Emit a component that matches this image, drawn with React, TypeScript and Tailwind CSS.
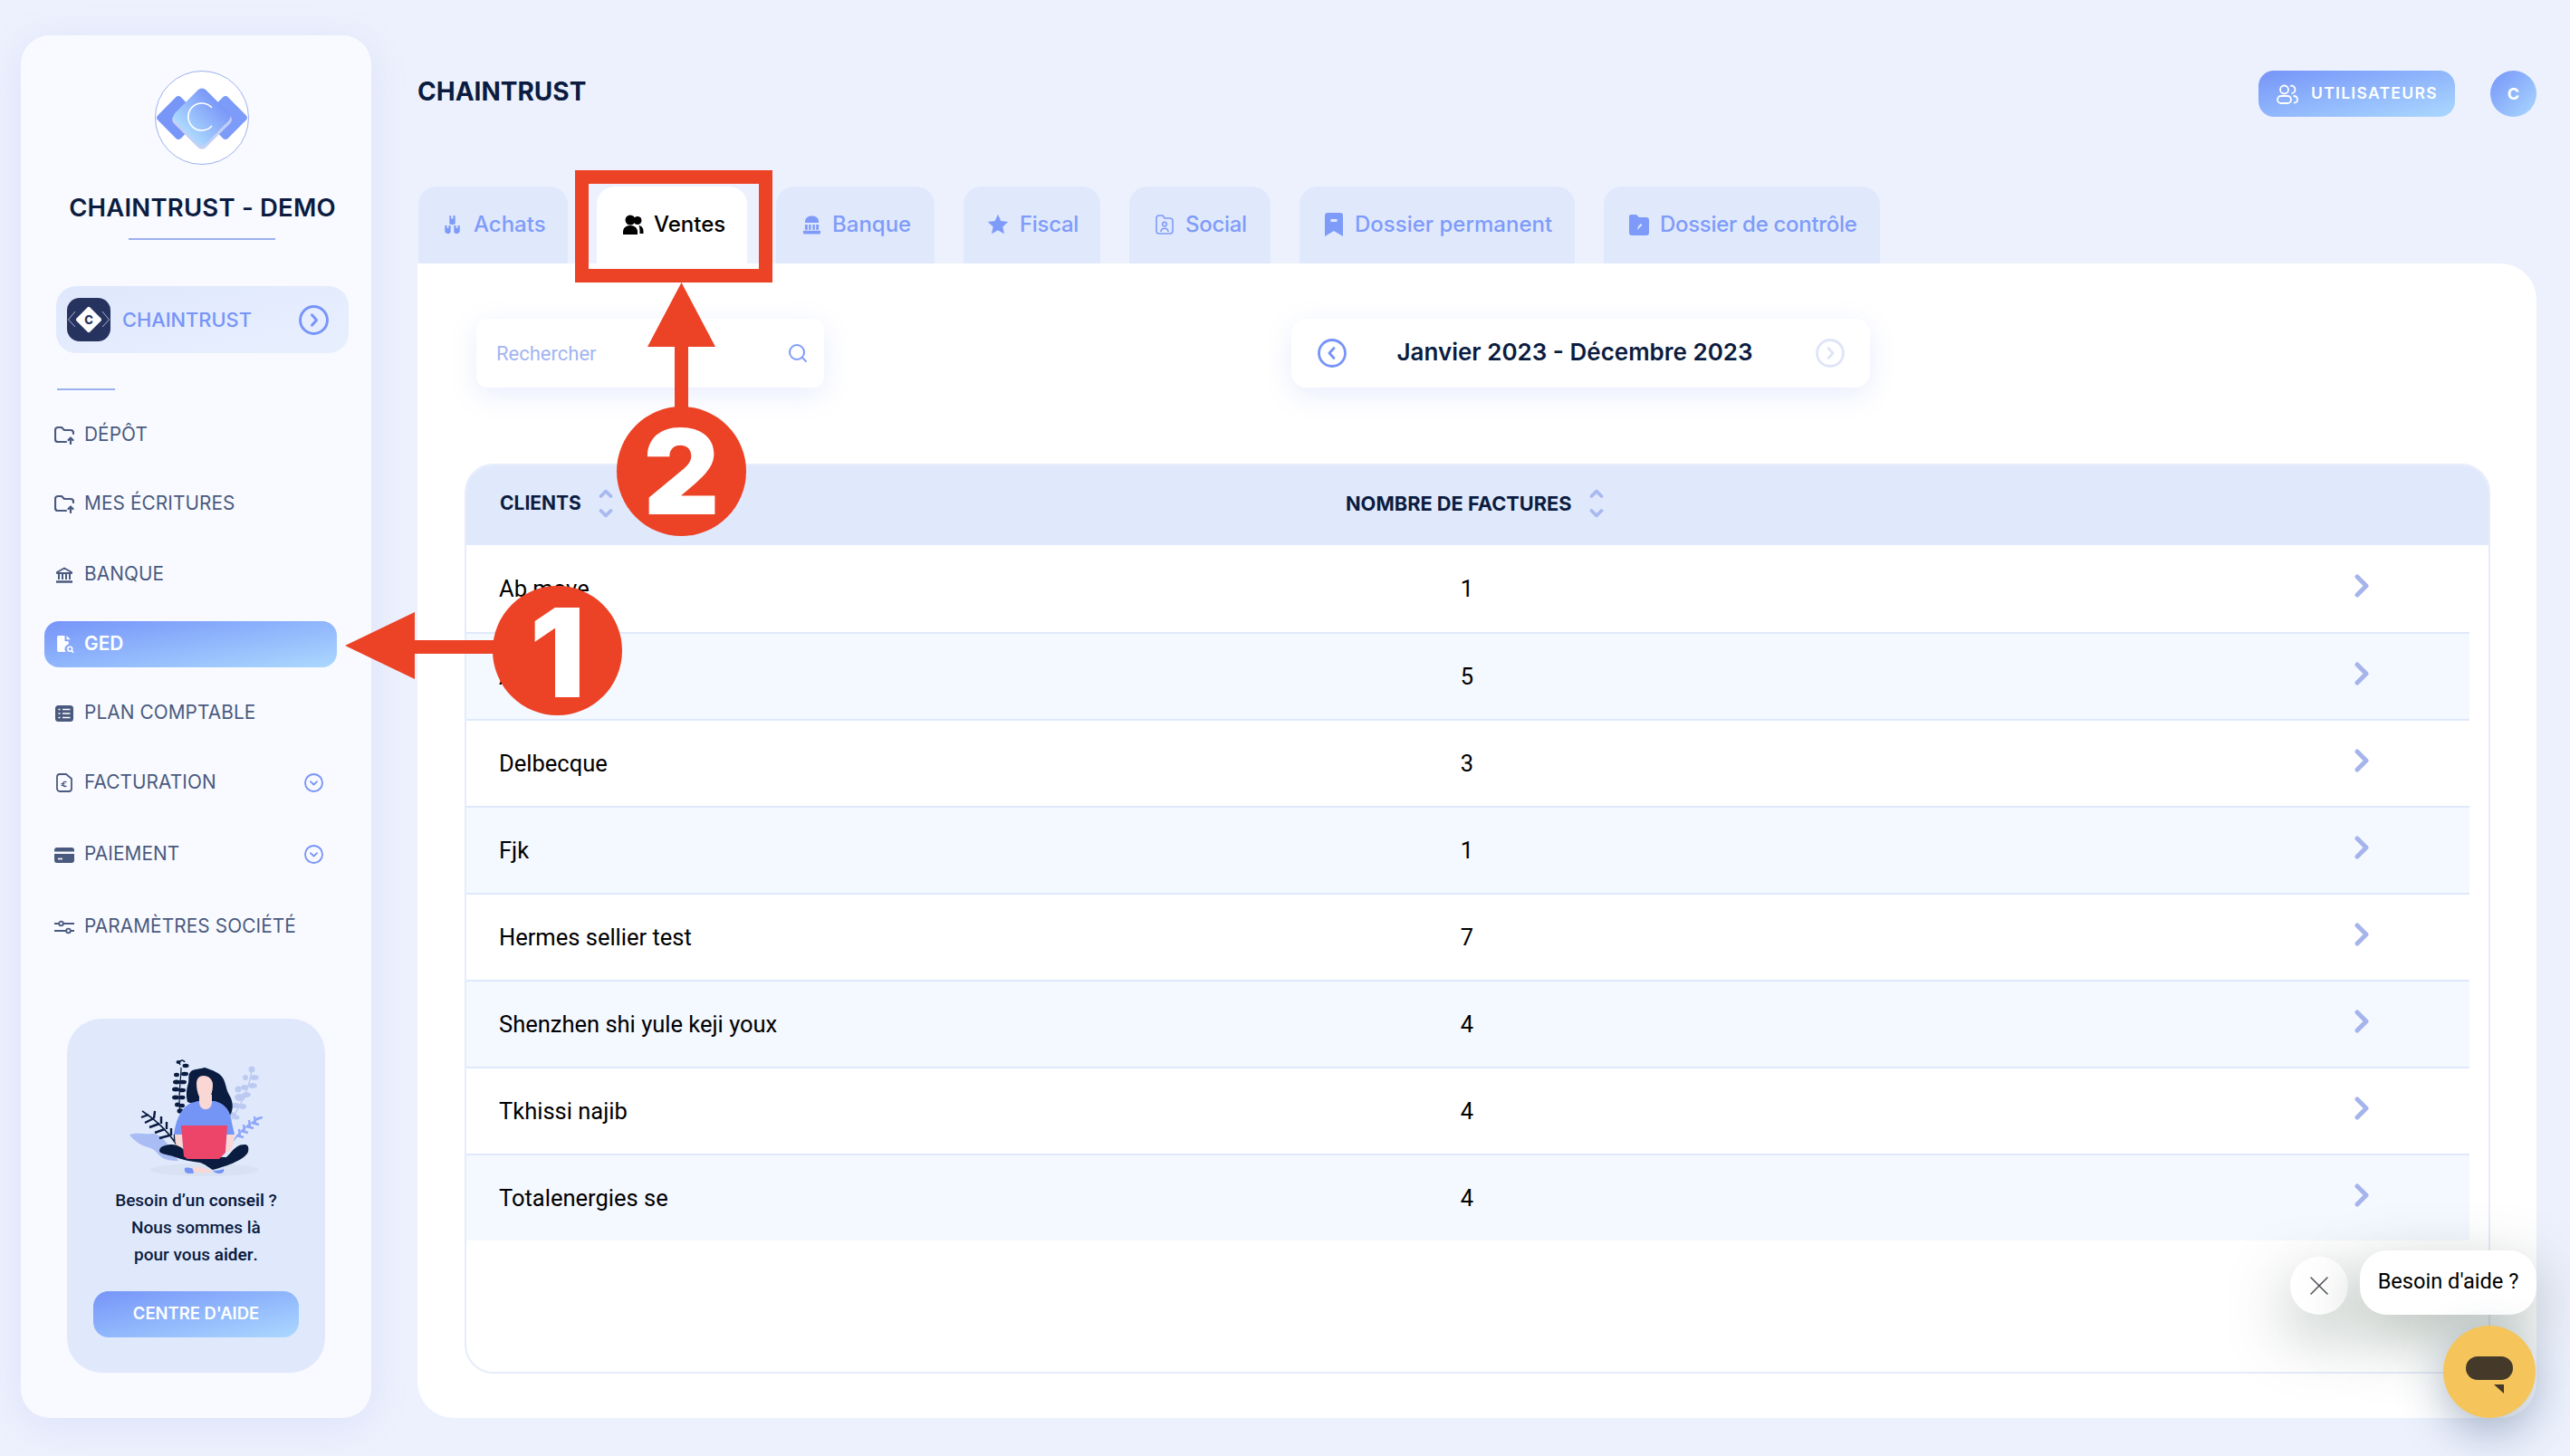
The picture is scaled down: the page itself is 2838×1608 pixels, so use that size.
import type { ReactNode } from "react";
import { Search, X } from "lucide-react";

const navy = "#0b1c40";

const FolderUp = () => (
  <svg viewBox="0 0 22 20" className="h-[20px] w-[22px]" fill="none" stroke="currentColor" strokeWidth="2.200" strokeLinecap="round" strokeLinejoin="round">
    <path d="M13 17H4a3 3 0 0 1-3-3V4a3 3 0 0 1 3-3h4l3 3h7a3 3 0 0 1 3 3v1" />
    <path d="M18 19v-6M15.500 15l2.500-2.500 2.500 2.500" />
  </svg>
);

const Bank = () => (
  <svg viewBox="0 0 20 18" className="h-[18px] w-[20px]" fill="none" stroke="currentColor" strokeWidth="2" strokeLinejoin="round">
    <path d="M2 6 10 1.500 18 6v1H2z" />
    <path d="M4 8v6M8 8v6M12 8v6M16 8v6" />
    <path d="M1 16.500h18" strokeWidth="2.500" />
  </svg>
);

const GedIcon = () => (
  <svg viewBox="0 0 20 20" className="h-[21px] w-[21px]" fill="white">
    <path d="M2 2.500A1.500 1.500 0 0 1 3.500 1H10v6h4v3a5 5 0 0 0-3 8H3.500A1.500 1.500 0 0 1 2 16.500z" />
    <path d="M12 1l4 4h-4z" />
    <circle cx="15.500" cy="15" r="2.300" fill="none" stroke="white" strokeWidth="1.500" />
    <path d="m17.200 16.800 2 2" stroke="white" strokeWidth="1.500" />
  </svg>
);

const ListIcon = () => (
  <svg viewBox="0 0 20 18" className="h-[18px] w-[20px]">
    <rect width="20" height="18" rx="3.500" fill="currentColor" />
    <path d="M3.500 4.500h2M3.500 9h2M3.500 13.500h2M8 4.500h8.500M8 9h8.500M8 13.500h8.500" stroke="white" strokeWidth="1.700" />
  </svg>
);

const InvoiceIcon = () => (
  <svg viewBox="0 0 18 21" className="h-[21px] w-[18px]" fill="none" stroke="currentColor" strokeWidth="1.800" strokeLinejoin="round">
    <path d="M4 1h7l6 5v11a3 3 0 0 1-3 3H4a3 3 0 0 1-3-3V4a3 3 0 0 1 3-3z" />
    <path d="M11.500 10a2.500 2.500 0 0 0-4 1v2a2.500 2.500 0 0 0 4 1M5.500 11.500h4M5.500 13.300h4" strokeWidth="1.200" />
  </svg>
);

const CardIcon = () => (
  <svg viewBox="0 0 22 18" className="h-[18px] w-[22px]">
    <path d="M0 4a3 3 0 0 1 3-3h16a3 3 0 0 1 3 3v1.500H0zM0 8h22v7a3 3 0 0 1-3 3H3a3 3 0 0 1-3-3z" fill="currentColor" />
    <path d="M4 13.500h5" stroke="white" strokeWidth="1.600" />
  </svg>
);

const SlidersIcon = () => (
  <svg viewBox="0 0 22 16" className="h-[16px] w-[22px]" fill="none" stroke="currentColor" strokeWidth="1.800">
    <path d="M0 4h5M10 4h12M0 12h13M18 12h4" />
    <circle cx="7.500" cy="4" r="2.300" />
    <circle cx="15.500" cy="12" r="2.300" />
  </svg>
);

const CircleChevron = ({ dir, className }: { dir: "left" | "right" | "down"; className: string }) => (
  <svg viewBox="0 0 32 32" className={className} fill="none" stroke="currentColor" strokeWidth="2.800" strokeLinecap="round" strokeLinejoin="round">
    <circle cx="16" cy="16" r="14.500" />
    {dir === "left" && <path d="m18 10.500-5 5.500 5 5.500" />}
    {dir === "right" && <path d="m14 10.500 5 5.500-5 5.500" />}
    {dir === "down" && <path d="m10.500 14 5.500 5 5.500-5" />}
  </svg>
);

const BigLogo = () => (
  <svg viewBox="0 0 104 104" className="h-[104px] w-[104px]">
    <defs>
      <linearGradient id="dia" x1="0" y1="0" x2="0" y2="1">
        <stop offset="0" stopColor="#7a97f8" />
        <stop offset="1" stopColor="#abd8fe" />
      </linearGradient>
    </defs>
    <circle cx="52" cy="52" r="51.500" fill="white" stroke="#9bb0ef" strokeWidth="1" />
    <rect x="8" y="34" width="36" height="36" rx="4" transform="rotate(45 26 52)" fill="#7896f8" />
    <rect x="60" y="34" width="36" height="36" rx="4" transform="rotate(45 78 52)" fill="#7d9bf8" />
    <rect x="27" y="29" width="50" height="50" rx="6" transform="rotate(45 52 54)" fill="#c3d0f7" />
    <rect x="28" y="27" width="48" height="48" rx="6" transform="rotate(45 52 51)" fill="url(#dia)" />
    <path d="M63 41a15 15 0 1 0 0 20" fill="none" stroke="white" strokeWidth="1.600" />
  </svg>
);

const SmallLogo = () => (
  <svg viewBox="0 0 48 48" className="h-[48px] w-[48px]">
    <rect width="48" height="48" rx="14" fill="#26335f" />
    <path d="M9 15 1.500 24 9 32M39 15l7.500 9-7.500 8" fill="none" stroke="#c9d3f3" strokeWidth="0.800" />
    <rect x="13.500" y="13.500" width="21" height="21" rx="2" transform="rotate(45 24 24)" fill="white" />
    <text x="24" y="29" textAnchor="middle" fontSize="13" fontWeight="800" fontFamily="Inter, sans-serif" fill="#26335f">C</text>
  </svg>
);

const Woman = () => (
  <svg viewBox="0 0 165 140" className="h-[140px] w-[165px]">
    <ellipse cx="91" cy="127" rx="60" ry="7" fill="#d8e2f3" />
    <path d="M8 88c8-3 18 0 24-1 8-1 14 6 20 14l10 16c-8 0-16-1-20-5-5-5-6-8-14-10-8-2-16-8-20-14z" fill="#a9bcf3" />
    <g stroke="#0a1c40" strokeWidth="1.500" fill="#0a1c40">
      <path d="M22 62c14 9 28 22 38 37" fill="none" />
      <path d="M29 66l-8 3M35 70l-10 5M41 76l-11 4M47 82l-11 4M52 89l-11 3M36 62l-1 8M43 68l0 8M49 74l0 8M54 81l0 8M58 88l0 7" strokeWidth="2.400" />
    </g>
    <g fill="#0a1c40">
      <path d="M64 11c-3-4 3-7 5-3" fill="none" stroke="#0a1c40" strokeWidth="1.500" />
      <path d="M65 14c0 16-4 30-1 50" fill="none" stroke="#0a1c40" strokeWidth="1.300" />
      <ellipse cx="62" cy="8" rx="2.500" ry="2" />
      <ellipse cx="70" cy="12" rx="3.500" ry="2.200" />
      <ellipse cx="69" cy="21" rx="4" ry="2.300" />
      <ellipse cx="60" cy="22" rx="3" ry="2.300" />
      <ellipse cx="67" cy="30" rx="4" ry="2.300" />
      <ellipse cx="60" cy="30" rx="4" ry="2.500" />
      <ellipse cx="66" cy="39" rx="4" ry="2.300" />
      <ellipse cx="59" cy="38" rx="4" ry="2.500" />
      <ellipse cx="66" cy="47" rx="3.500" ry="2.300" />
      <ellipse cx="59" cy="47" rx="4" ry="2.500" />
      <ellipse cx="66" cy="56" rx="3" ry="2.300" />
      <ellipse cx="61" cy="55" rx="3" ry="2.500" />
      <ellipse cx="64" cy="62" rx="3.500" ry="2.800" />
    </g>
    <g fill="#bccaf2">
      <path d="M143 16c-2 20-12 40-24 58" fill="none" stroke="#bccaf2" strokeWidth="1.500" />
      <circle cx="143" cy="16" r="3.500" />
      <ellipse cx="146" cy="25" rx="5" ry="3" />
      <ellipse cx="136" cy="25" rx="3" ry="3" />
      <ellipse cx="144" cy="34" rx="5" ry="3" />
      <ellipse cx="135" cy="36" rx="4" ry="3" />
      <ellipse cx="137" cy="44" rx="5" ry="3" />
      <ellipse cx="128" cy="38" rx="3.500" ry="3.500" />
      <ellipse cx="130" cy="47" rx="6" ry="4" />
      <ellipse cx="125" cy="56" rx="6" ry="3" />
      <ellipse cx="133" cy="57" rx="4" ry="3" />
      <ellipse cx="121" cy="66" rx="5" ry="3" />
      <ellipse cx="126" cy="69" rx="3.500" ry="2.500" />
    </g>
    <g stroke="#8ea7fa" strokeWidth="2.400" fill="none">
      <path d="M155 69c-12 4-24 14-33 27" strokeWidth="1.500" />
      <path d="M154 69l-6 2M146 68l1 7M140 72l1 7M134 77l1 7M129 82l1 7M151 77l-8-2M145 81l-8-2M139 86l-8-2M134 91l-8-2" />
    </g>
    <path d="M91 14c8 3 17 5 21 13 3 7 3 12 6 17 4 6 5 14 2 21l-2 3-46-16c-2-7-1-15 1-21 1-6-1-9 3-13 4-3 10-2 15-4z" fill="#0a1c40" />
    <path d="M57 88c2-15 7-28 17-34 4-2 7-2 10-3l18 0c9 2 15 8 17 15l5 22z" fill="#7595f6" />
    <path d="M58 88h7l2 18h-5c-3-6-4-12-4-18zM116 88h8c0 7-2 14-5 19h-4z" fill="#f8d7d4" />
    <path d="M85 44h14v8c0 11-14 11-14 0z" fill="#f8d7d4" />
    <path d="M82 32c0-6 3-9 8-9s10 4 10 10c0 8-3 18-9 18s-9-11-9-19z" fill="#f8d7d4" />
    <path d="M41 106c0-5 7-7 14-7 9 0 14 7 22 13l38 1c7-7 11-14 20-14 4 0 5 3 4 8-3 9-27 17-39 20-5-3-8-6-14-8-9-1-19-3-30-7-7-2-15-3-15-6z" fill="#0a1c40" />
    <path d="M69 125c3-1 9 0 12 2l-3 4H73c-3 0-5-3-4-6zM100 128c4 0 9-1 12-2 1 3-1 5-5 5-3 0-5-1-7-3z" fill="#7595f6" />
    <path d="M78 124c5-1 13 2 22 4l-3 2H82c-3 0-5-3-4-6z" fill="#f8d7d4" />
    <path d="M65 78h51l-2 30-7 7H72l-4-3z" fill="#ec4569" />
  </svg>
);

const TabIcon = ({ name, color }: { name: string; color: string }) => {
  if (name === "Achats")
    return (
      <svg viewBox="0 0 20 24" className="h-[22px] w-[19px]" fill={color}>
        <path d="M7 1h1.500v4H11V1h1.500a1 1 0 0 1 1 1v8a2 2 0 0 1-2 2h-3a2 2 0 0 1-2-2V2a1 1 0 0 1 1-1z" />
        <path d="M1 13h2.500v3h2v-3H8v7a3 3 0 0 1-3.500 3A3.500 3.500 0 0 1 1 20zM12 13h2.500v3h2v-3H19v7a3.500 3.500 0 0 1-3.500 3 3 3 0 0 1-3.500-3z" />
      </svg>
    );
  if (name === "Ventes")
    return (
      <svg viewBox="0 0 24 24" className="h-[24px] w-[24px]" fill={color}>
        <circle cx="9" cy="7" r="5.500" />
        <circle cx="17" cy="7.500" r="4.500" />
        <path d="M1 23v-3c0-4 3-7 8-7s8 3 8 7v3z" />
        <path d="M18.500 13c3 .5 5 3 5 6v3h-4v-3c0-2-.5-4.500-1-6z" />
      </svg>
    );
  if (name === "Banque")
    return (
      <svg viewBox="0 0 20 22" className="h-[22px] w-[19px]" fill={color}>
        <path d="M2 8c0-5 4-7 8-7s8 2 8 7v1H2z" />
        <path d="M2 11h3v6H2zM6.500 11h2.500v6H6.500zM11 11h2.500v6H11zM15 11h3v6h-3zM0 18h20v3a1 1 0 0 1-1 1H1a1 1 0 0 1-1-1z" />
      </svg>
    );
  if (name === "Fiscal")
    return (
      <svg viewBox="0 0 24 24" className="h-[24px] w-[24px]" fill={color}>
        <path d="M12 .8l3.300 7.300 8 .9-6 5.400 1.700 7.900-7-4-7 4 1.700-7.900-6-5.400 8-.9z" />
      </svg>
    );
  if (name === "Social")
    return (
      <svg viewBox="0 0 20 22" className="h-[22px] w-[20px]" fill="none" stroke={color} strokeWidth="1.600" strokeLinejoin="round">
        <path d="M1 4a3 3 0 0 1 3-3h4l2 3h6a3 3 0 0 1 3 3v11a3 3 0 0 1-3 3H4a3 3 0 0 1-3-3z" />
        <circle cx="10" cy="10.500" r="2.300" />
        <path d="M6 19c0-5 8-5 8 0" />
      </svg>
    );
  if (name === "Dossier permanent")
    return (
      <svg viewBox="0 0 20 26" className="h-[26px] w-[20px]">
        <path d="M3 0h14a3 3 0 0 1 3 3v23l-10-6-10 6V3a3 3 0 0 1 3-3z" fill={color} />
        <rect x="6.500" y="7" width="7" height="3" fill="#e0e9fc" />
      </svg>
    );
  return (
    <svg viewBox="0 0 22 24" className="h-[24px] w-[22px]">
      <path d="M0 3a2 2 0 0 1 2-2h6l3 3h8a3 3 0 0 1 3 3v14a3 3 0 0 1-3 3H3a3 3 0 0 1-3-3z" fill={color} />
      <path d="m9 18 1-4 3-3 1.500 1.500-3 3z" fill="#e0e9fc" />
    </svg>
  );
};

const tabs = [
  { name: "Achats", cls: "w-[165px] pl-[28px] gap-[14px]", active: false },
  { name: "Ventes", cls: "w-[166px] pl-[28px] gap-[11px]", active: true },
  { name: "Banque", cls: "w-[175px] pl-[30px] gap-[13px]", active: false },
  { name: "Fiscal", cls: "w-[151px] pl-[26px] gap-[12px] tracking-[-0.3px]", active: false },
  { name: "Social", cls: "w-[156px] pl-[29px] gap-[13px] tracking-[-0.3px]", active: false },
  { name: "Dossier permanent", cls: "w-[304px] pl-[28px] gap-[13px]", active: false },
  { name: "Dossier de contrôle", cls: "w-[305px] pl-[28px] gap-[12px] tracking-[-0.3px]", active: false },
];

const nav: { label: string; icon: ReactNode; mt: string; active?: boolean; more?: boolean }[] = [
  { label: "DÉPÔT", icon: <FolderUp />, mt: "mt-[24px]" },
  { label: "MES ÉCRITURES", icon: <FolderUp />, mt: "mt-[25px]" },
  { label: "BANQUE", icon: <Bank />, mt: "mt-[27px]" },
  { label: "GED", icon: <GedIcon />, mt: "mt-[26px]", active: true },
  { label: "PLAN COMPTABLE", icon: <ListIcon />, mt: "mt-[25px]" },
  { label: "FACTURATION", icon: <InvoiceIcon />, mt: "mt-[26px]", more: true },
  { label: "PAIEMENT", icon: <CardIcon />, mt: "mt-[28px]", more: true },
  { label: "PARAMÈTRES SOCIÉTÉ", icon: <SlidersIcon />, mt: "mt-[29px]" },
];

const rows = [
  { name: "Ab move", count: 1 },
  { name: "Air france", count: 5 },
  { name: "Delbecque", count: 3 },
  { name: "Fjk", count: 1 },
  { name: "Hermes sellier test", count: 7 },
  { name: "Shenzhen shi yule keji youx", count: 4 },
  { name: "Tkhissi najib", count: 4 },
  { name: "Totalenergies se", count: 4 },
];

const SortIcons = () => (
  <div className="flex flex-col gap-[12px] text-[#a9b9f0]">
    <svg viewBox="0 0 16 10" className="h-[10px] w-[16px]" fill="none" stroke="currentColor" strokeWidth="3.800" strokeLinecap="round" strokeLinejoin="round">
      <path d="m2.500 8 5.500-5.500 5.500 5.500" />
    </svg>
    <svg viewBox="0 0 16 10" className="h-[10px] w-[16px]" fill="none" stroke="currentColor" strokeWidth="3.800" strokeLinecap="round" strokeLinejoin="round">
      <path d="m2.500 2 5.500 5.500 5.500-5.500" />
    </svg>
  </div>
);

const Sidebar = () => (
  <aside className="mt-[39px] ml-[23px] flex h-[1527px] w-[387px] shrink-0 flex-col rounded-[32px] bg-[#f9faff] shadow-[0_8px_44px_rgba(120,145,240,0.14)]">
    <div className="mt-[39px] ml-[148px]">
      <BigLogo />
    </div>
    <h1 className="mt-[30px] pl-[14px] text-center text-[27.500px] leading-[34px] font-semibold tracking-[0.2px] text-[#0b1c40]">CHAINTRUST - DEMO</h1>
    <div className="mt-[17px] ml-[119px] h-[2px] w-[162px] bg-[#9bb0ef]" />
    <div className="mt-[51px] ml-[39px] flex h-[74px] w-[323px] items-center rounded-[22px] bg-gradient-to-br from-[#dfe7fc] to-[#e8f0ff] pl-[12px]">
      <SmallLogo />
      <span className="ml-[13px] text-[21.800px] font-medium text-[#7794f8]">CHAINTRUST</span>
      <CircleChevron dir="right" className="mr-[22px] ml-auto h-[33px] w-[33px] text-[#7794f8]" />
    </div>
    <div className="mt-[39px] ml-[40px] h-[2px] w-[64px] bg-[#9bb0ef]" />
    <nav className="flex flex-col">
      {nav.map((item) => (
        <div
          key={item.label}
          className={`${item.mt} ml-[26px] flex h-[51px] w-[323px] items-center rounded-[16px] pl-[11px] ${
            item.active ? "bg-gradient-to-br from-[#7794f8] to-[#abd8fe] font-semibold text-white" : "text-[#4a5a7e]"
          }`}
        >
          <span className="flex w-[22px] shrink-0 justify-center">{item.icon}</span>
          <span className="ml-[11px] text-[20.800px] leading-none tracking-[0.1px]">{item.label}</span>
          {item.more && <CircleChevron dir="down" className="mr-[15px] ml-auto h-[21px] w-[21px] text-[#7794f8]" />}
        </div>
      ))}
    </nav>
    <div className="mt-auto mb-[50px] ml-[51px] flex h-[391px] w-[285px] flex-col rounded-[38px] bg-[#e0e9fc] pt-[40px]">
      <div className="ml-[61px]">
        <Woman />
      </div>
      <p className="mt-[6px] text-center font-['Roboto',sans-serif] text-[19px] leading-[30px] font-medium text-[#0b1c40]">
        Besoin d’un <span className="font-semibold">conseil</span> ?<br />
        Nous sommes là
        <br />
        pour vous <span className="font-semibold">aider</span>.
      </p>
      <button className="mt-[25px] ml-[29px] h-[51px] w-[227px] rounded-[17px] bg-gradient-to-br from-[#7794f8] to-[#abd8fe] pb-[2px] text-[18.400px] font-semibold text-white">
        CENTRE D'AIDE
      </button>
    </div>
  </aside>
);

const ClientTable = () => (
  <div className="mt-[84px] ml-[52px] h-[1005px] w-[2237px] overflow-hidden rounded-[32px] border-2 border-[#e6ecfa]">
    <div className="-mx-[2px] -mt-[2px] grid h-[90px] grid-cols-[973px_1fr] items-center bg-[#e0e9fc] pb-[2px] text-[21px] font-bold text-[#0b1c40]">
      <div className="flex items-center gap-[19px] pl-[39px]">
        CLIENTS
        <SortIcons />
      </div>
      <div className="flex items-center gap-[19px] text-[21.800px]">
        NOMBRE DE FACTURES
        <SortIcons />
      </div>
    </div>
    <div className="w-[2212px]">
      {rows.map((row, i) => (
        <div
          key={row.name}
          className={`grid h-[96px] grid-cols-[971px_268px_1fr] items-center border-b-2 border-[#e0e9fc] font-['Roboto',sans-serif] text-[25.500px] text-black first:h-[98px] last:h-[94px] last:border-b-0 ${
            i % 2 === 1 ? "bg-[#f4f8ff]" : "bg-white"
          }`}
        >
          <div className="pl-[36px]">{row.name}</div>
          <div className="text-center">{row.count}</div>
          <div className="pl-[846px]">
            <svg viewBox="0 0 16 26" className="-mt-[6px] h-[26px] w-[16px]" fill="none" stroke="#a5b5ec" strokeWidth="5" strokeLinecap="round" strokeLinejoin="round">
              <path d="m3 3 10 10-10 10" />
            </svg>
          </div>
        </div>
      ))}
    </div>
  </div>
);

const Main = () => (
  <main className="ml-[51px] w-[2340px] pt-[78px]">
    <header className="flex h-[51px] items-center">
      <h2 className="pb-[6px] text-[28px] font-bold text-[#0b1c40]">CHAINTRUST</h2>
      <button className="ml-auto flex h-[51px] w-[217px] items-center rounded-[17px] bg-gradient-to-br from-[#7794f8] to-[#abd8fe] pl-[20px] text-[17.500px] font-semibold tracking-[1.300px] text-white">
        <svg viewBox="0 0 24 22" className="h-[22px] w-[24px]" fill="none" stroke="white" strokeWidth="1.800">
          <circle cx="8.500" cy="6" r="4.500" />
          <path d="M15 2a4 4 0 0 1 5.500 4 4 4 0 0 1-4 4" />
          <rect x="1" y="13" width="15" height="8" rx="4" />
          <path d="M18.500 13c3 0 4.500 2 4.500 4s-1.500 3.500-4 3.500" />
        </svg>
        <span className="ml-[14px]">UTILISATEURS</span>
      </button>
      <div className="ml-[39px] flex h-[51px] w-[51px] items-center justify-center rounded-full bg-gradient-to-br from-[#7794f8] to-[#abd8fe] text-[18px] font-bold text-white">
        C
      </div>
    </header>

    <div className="mt-[77px] flex h-[85px] gap-[32px] pl-[1px]">
      {tabs.map((tab) => (
        <div
          key={tab.name}
          className={`${tab.cls} flex h-[85px] items-center rounded-t-[20px] pb-[2px] text-[24px] font-medium ${
            tab.active ? "bg-white text-black" : "bg-[#e0e9fc] text-[#7f9bf9]"
          }`}
        >
          <TabIcon name={tab.name} color={tab.active ? "#000000" : "#7f9bf9"} />
          <span>{tab.name}</span>
        </div>
      ))}
    </div>

    <section className="h-[1275px] rounded-tr-[40px] rounded-b-[40px] bg-white pt-[61px]">
      <div className="flex">
        <div className="ml-[65px] flex h-[76px] w-[384px] items-center rounded-[12px] bg-white pr-[17px] pl-[22px] text-[#a3b5f2] shadow-[0_8px_30px_rgba(120,145,240,0.16)]">
          <span className="font-['Roboto',sans-serif] text-[22px]">Rechercher</span>
          <Search className="ml-auto h-[24px] w-[24px] text-[#7f9bf9]" strokeWidth={2} />
        </div>
        <div className="ml-[516px] flex h-[76px] w-[639px] items-center rounded-[16px] bg-white pl-[29px] shadow-[0_8px_30px_rgba(120,145,240,0.16)]">
          <CircleChevron dir="left" className="h-[32px] w-[32px] text-[#7794f8]" />
          <span className="mb-[3px] ml-[55px] w-[394px] text-center text-[26px] font-semibold text-[#0b1c40]">Janvier 2023 - Décembre 2023</span>
          <CircleChevron dir="right" className="ml-[69px] h-[32px] w-[32px] text-[#dfe5f6]" />
        </div>
      </div>
      <ClientTable />
    </section>
  </main>
);

// arrows and numbered markers drawn over the page
const Annotations = () => (
  <>
    <svg viewBox="0 0 2838 1608" className="pointer-events-none absolute top-0 left-0 h-[1608px] w-[2838px]" fill="#ec4225">
      <path d="M381 713 458 676V707H560V722H458V750z" />
      <path d="M752.500 312 790 383H760V460H745V383H715z" />
    </svg>
    <div className="absolute top-[188px] left-[635px] h-[124px] w-[218px] border-[15px] border-[#ec4225]" />
    <div className="absolute top-[449px] left-[681px] flex h-[143px] w-[143px] items-center justify-center rounded-full bg-[#ec4225] text-[130px] leading-none font-black text-white">
      2
    </div>
    <div className="absolute top-[647px] left-[544px] flex h-[143px] w-[143px] items-center justify-center rounded-full bg-[#ec4225] pt-[4px] text-[136px] leading-none font-black text-white">
      1
    </div>
  </>
);

const ChatWidget = () => (
  <>
    <div className="absolute top-[1388px] left-[2529px] flex h-[64px] w-[64px] items-center justify-center rounded-full bg-white shadow-[0_24px_70px_rgba(60,85,70,0.4)]">
      <X className="h-[36px] w-[36px] text-[#4c4f55]" strokeWidth={1} />
    </div>
    <div className="absolute top-[1381px] left-[2606px] flex h-[71px] w-[195px] items-center justify-center rounded-[30px] bg-white pb-[2px] font-['Roboto',sans-serif] text-[23.600px] text-black shadow-[0_24px_70px_rgba(60,85,70,0.4)]">
      Besoin d'aide ?
    </div>
    <div className="absolute top-[1464px] left-[2698px] flex h-[102px] w-[102px] items-center justify-center rounded-full bg-[#f5c55c] shadow-[0_16px_50px_rgba(40,70,110,0.38)]">
      <svg viewBox="0 0 52 42" className="mt-[7px] h-[42px] w-[52px]">
        <rect width="52" height="26" rx="13" fill="#453a2a" />
        <path d="M31 31h11v10z" fill="#453a2a" />
      </svg>
    </div>
  </>
);

export default function App() {
  return (
    <div className="relative flex h-[1608px] w-[2838px] overflow-hidden bg-[#edf1fd] font-['Inter',sans-serif]" style={{ color: navy }}>
      <Sidebar />
      <Main />
      <ChatWidget />
      <Annotations />
    </div>
  );
}
